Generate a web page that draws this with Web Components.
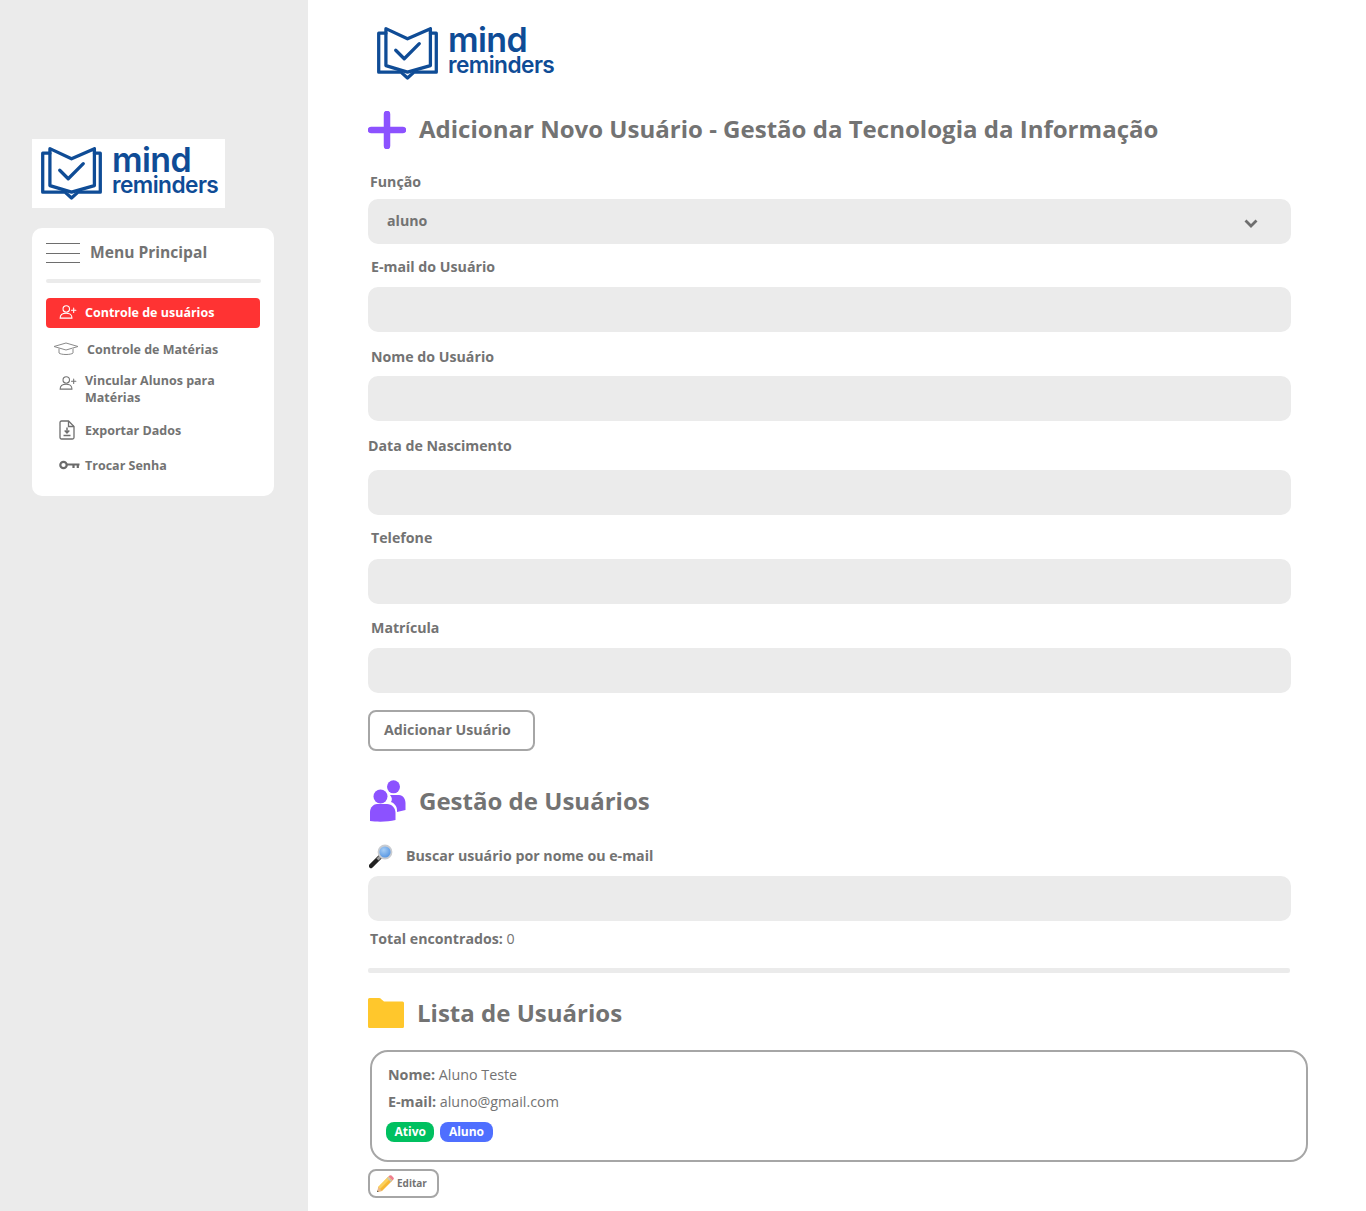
<!DOCTYPE html>
<html lang="pt-BR"><head><meta charset="utf-8"><title>Mind Reminders</title>
<style>
html,body{margin:0;padding:0;background:#fff}
body{font-family:"Open Sans","Noto Sans",sans-serif;color:#737373}
</style></head><body>
<mr-app>
  <mr-sidebar slot="side">
    <mr-logo boxed></mr-logo>
    <mr-menu>
      <mr-item active icon="user">Controle de usuários</mr-item>
      <mr-item icon="hat" style="--top:12px">Controle de Matérias</mr-item>
      <mr-item icon="user" style="--top:12px">Vincular Alunos para Matérias</mr-item>
      <mr-item icon="file" style="--top:12px">Exportar Dados</mr-item>
      <mr-item icon="key" style="--top:14px">Trocar Senha</mr-item>
    </mr-menu>
  </mr-sidebar>
  <mr-logo style="margin:25px 0 0 9px"></mr-logo>
  <mr-title icon="plus" style="margin-top:31px;--up:4px">Adicionar Novo Usuário - Gestão da Tecnologia da Informação</mr-title>
  <mr-field select value="aluno" style="--mt:23px;--gap:7px;--ml:2px">Função</mr-field>
  <mr-field style="--mt:13px;--gap:10px;--ml:3px">E-mail do Usuário</mr-field>
  <mr-field style="--mt:15px;--gap:9px;--ml:3px">Nome do Usuário</mr-field>
  <mr-field style="--mt:15px;--gap:14px;--ml:0px">Data de Nascimento</mr-field>
  <mr-field style="--mt:13px;--gap:11px;--ml:3px">Telefone</mr-field>
  <mr-field style="--mt:14px;--gap:10px;--ml:3px">Matrícula</mr-field>
  <mr-button style="margin-top:17px">Adicionar Usuário</mr-button>
  <mr-title icon="users" style="margin-top:29px;--up:2px">Gestão de Usuários</mr-title>
  <mr-field search style="--mt:24px;--gap:10px;--ml:38px">Buscar usuário por nome ou e-mail</mr-field>
  <mr-total count="0"></mr-total>
  <mr-rule></mr-rule>
  <mr-title icon="folder" style="margin-top:25px;--up:2px">Lista de Usuários</mr-title>
  <mr-card name="Aluno Teste" email="aluno@gmail.com"></mr-card>
  <mr-edit>Editar</mr-edit>
</mr-app>
<script>
const T=(h)=>{const t=document.createElement('template');t.innerHTML=h;return t};
const def=(n,h,init)=>{customElements.define(n,class extends HTMLElement{
  constructor(){super();this.attachShadow({mode:'open'}).appendChild(T(h).content.cloneNode(true));}
  connectedCallback(){init&&init(this,this.shadowRoot)}
})};
const ICONS={
 user:'<svg width="18" height="14" viewBox="0 0 20 16" fill="none" stroke="currentColor" stroke-width="1.2" stroke-linecap="round"><circle cx="8" cy="4.500" r="3.700"/><path d="M1 15c0-3.600 2.800-5.600 7-5.600 3 0 5.200 1 6 3 .4.900.5 1.600.5 2.600z"/><path d="M14 6h5M16.500 3.500v5"/></svg>',
 hat:'<svg width="26" height="14" viewBox="0 0 26 14" fill="none" stroke="#8a8a8a" stroke-width="1"><path d="M1 4.500 13 1l12 3.500L13 8z"/><path d="M6 6.500V11c2 2 12 2 14 0V6.500"/><path d="M20 6v5" stroke="#c4c4c4" stroke-width="2"/></svg>',
 file:'<svg width="16" height="20" viewBox="0 0 16 20" fill="none" stroke="#6f6f6f" stroke-width="1.300"><path d="M2.500 1h7L15 6.500V17.500a1.500 1.500 0 0 1-1.500 1.500h-11A1.500 1.500 0 0 1 1 17.500v-15A1.500 1.500 0 0 1 2.500 1z"/><path d="M9.500 1v5.500H15"/><path d="M8 7.500v5M5.700 10.500 8 13l2.300-2.500" stroke-width="1.500"/><path d="M4.500 15.500h7" stroke-width="1.500"/></svg>',
 key:'<svg width="21" height="10" viewBox="0 0 21 10" fill="none" stroke="#6a6a6a"><circle cx="4.500" cy="5" r="3.200" stroke-width="2.200"/><path d="M7.500 4.500H20.500M14.500 4.500v3.500M18.800 4.500v3.500" stroke-width="2.200"/></svg>',
 plus:'<svg width="38" height="38" viewBox="0 0 38 38"><path d="M19 3v32M3 19h32" stroke="#8c52ff" stroke-width="6.500" stroke-linecap="round"/></svg>',
 users:'<svg width="38" height="42" viewBox="0 0 38 42" fill="#8c52ff"><circle cx="25.500" cy="6.800" r="6.500"/><path d="M24 15H31C35 15 37.500 19 37.500 23V30L29 32V30C29 26 26 23 23 22C24.500 20 24 17 22 15z"/><circle cx="12.500" cy="16.500" r="7"/><path d="M2 41V32C2 27 6 24 9 24H19C24 24 27.500 28 27.500 33V40C20 42 9 42 2 41z"/></svg>',
 folder:'<svg width="36" height="30" viewBox="0 0 36 30" fill="#ffc72c"><path d="M1.500 0h9.500c1 0 1.700.4 2.300 1.200L16 3.500h18.500A1.500 1.500 0 0 1 36 5v23.500A1.500 1.500 0 0 1 34.500 30h-33A1.500 1.500 0 0 1 0 28.500v-27A1.500 1.500 0 0 1 1.500 0z"/></svg>'
};
def('mr-app',`<style>
:host{display:grid;grid-template-columns:308px 1fr;min-height:1211px;width:1366px;overflow:hidden}
.side{background:#ebebeb;min-height:1211px}
.main{display:flex;flex-direction:column;align-items:flex-start;padding-left:60px;padding-right:59px;min-width:0}
</style><div class="side"><slot name="side"></slot></div><div class="main"><slot></slot></div>`);
def('mr-sidebar',`<style>:host{display:flex;flex-direction:column;align-items:flex-start;padding:139px 34px 0 32px}</style><slot></slot>`);
def('mr-logo',`<style>
:host{display:flex;align-items:flex-start;gap:10px;color:#0f4c96;font-family:Inter,Roboto,sans-serif}
:host([boxed]){background:#fff;width:193px;height:69px;box-sizing:border-box;padding:6px 0 0 9px}
svg{display:block;flex:none;margin-top:2px}
.t{display:flex;flex-direction:column;font-weight:600}
.a{font-size:34px;line-height:30px;letter-spacing:-.6px;height:30px}
.b{font-size:22.700px;line-height:22px;letter-spacing:-.55px;margin-top:-1px}
</style><svg width="61" height="53" viewBox="52 48 186 162" fill="none" stroke="#0f4c96" stroke-width="10" stroke-linejoin="round" stroke-linecap="round"><path d="M79 53 145 84 215 53V166L145 186 79 166Z"/><path d="M79 67H57V186H125L145 204 165 186H233V67H215"/><path d="M109 119 135 145 181 99" stroke-width="10"/></svg><div class="t"><span class="a">mind</span><span class="b">reminders</span></div>`);
def('mr-menu',`<style>
:host{display:block;width:242px;height:268px;box-sizing:border-box;margin-top:20px;background:#fff;border-radius:10px;padding:15px 14px 0}
.h{display:flex;align-items:center;gap:10px;height:20px;font-size:15.600px;font-weight:700;color:#737373}
.h span{padding-bottom:3px}
.b{width:34px;height:20px;display:flex;flex-direction:column;justify-content:space-between}
.b i{display:block;height:1px;background:#6e6e6e}
hr{border:0;height:4px;background:#ebebeb;margin:16px 0 15px;width:215px;border-radius:2px}
</style><div class="h"><div class="b"><i></i><i></i><i></i></div><span>Menu Principal</span></div><hr><slot></slot>`);
def('mr-item',`<style>
:host{display:flex;align-items:center;width:214px;min-height:30px;box-sizing:border-box;margin-top:var(--top,0);padding:0 20px 2px 12px;border-radius:4px;font-size:12.500px;font-weight:700;line-height:17px;color:#737373}
:host([active]){background:#ff3333;color:#fff}
.i{flex:none;display:flex;justify-content:flex-start}
:host([icon=user]) .i{padding-left:1px;width:26px}
:host([icon=hat]) .i{margin-left:-5px;width:34px}
:host([icon=file]) .i{padding-left:1px;width:26px}
:host([icon=key]) .i{padding-left:1px;width:26px}
:host([icon=hat]),:host([icon=file]),:host([icon=key]){min-height:20px}
:host([icon=user]:not([active])){padding-right:30px;min-height:34px}
:host([icon=user]:not([active])) .i{margin-top:-12px}
</style><span class="i"></span><span><slot></slot></span>`,(el,s)=>{s.querySelector('.i').innerHTML=ICONS[el.getAttribute('icon')]});
def('mr-title',`<style>
:host{display:flex;align-items:center;gap:13px;height:38px;font-size:24.040px;font-weight:700;color:#737373;white-space:nowrap}
:host([icon=users]){height:42px}
:host([icon=folder]){height:30px}
.i{display:flex;flex:none}
.x{padding-bottom:var(--up,0)}
</style><span class="i"></span><span class="x"><slot></slot></span>`,(el,s)=>{s.querySelector('.i').innerHTML=ICONS[el.getAttribute('icon')]});
def('mr-field',`<style>
:host{display:block;width:923px;margin-top:var(--mt,0);font-size:14.200px;font-weight:700;color:#737373}
.l{display:flex;align-items:center;height:20px;box-sizing:border-box;padding:0 0 2px var(--ml,0);position:relative}
.m{position:absolute;left:1px;top:-2px;display:none}
:host([search]) .m{display:block}
.c{height:45px;margin-top:var(--gap,10px);background:#ebebeb;border-radius:10px;display:flex;align-items:center;justify-content:space-between;box-sizing:border-box;padding:0 33px 0 19px}
.v{padding-bottom:2px}
svg.a{display:none;margin-top:4px}
:host([select]) svg.a{display:block}
</style><div class="l"><svg class="m" width="25" height="25" viewBox="0 0 25 25"><defs><radialGradient id="g" cx=".4" cy=".35" r=".7"><stop offset="0" stop-color="#a6cdf5"/><stop offset="1" stop-color="#4a8ee0"/></radialGradient></defs><path d="M11 13 2 22" stroke="#222" stroke-width="4.500" stroke-linecap="round"/><path d="M8.500 15.500 11 13" stroke="#9a9a9a" stroke-width="3"/><circle cx="16" cy="8" r="6.500" fill="url(#g)" stroke="#c9ccd1" stroke-width="1.800"/></svg><slot></slot></div><div class="c"><span class="v"></span><svg class="a" width="14" height="9" viewBox="0 0 14 9" fill="none" stroke="#6e6e6e" stroke-width="2.800"><path d="M1.500 1.500 7 7l5.500-5.500"/></svg></div>`,(el,s)=>{s.querySelector('.v').textContent=el.getAttribute('value')||''});
def('mr-button',`<style>
:host{display:flex;align-items:center;width:167px;height:41px;box-sizing:border-box;padding:0 0 2px 14px;border:2px solid #a6a6a6;border-radius:8px;font-size:14.200px;font-weight:700;color:#737373}
</style><slot></slot>`);
def('mr-total',`<style>:host{display:block;margin:8px 0 0 2px;height:20px;line-height:20px;font-size:14.200px;color:#737373}b{font-weight:700}</style><b>Total encontrados:</b> <span></span>`,(el,s)=>{s.querySelector('span').textContent=el.getAttribute('count')});
def('mr-rule',`<style>:host{display:block;width:922px;height:5px;margin-top:19px;background:#ebebeb;border-radius:2px}</style>`);
def('mr-card',`<style>
:host{display:block;box-sizing:border-box;width:938px;height:112px;margin:22px 0 0 2px;border:2px solid #a6a6a6;border-radius:18px;padding:13px 16px 0;font-size:14.300px;color:#737373;line-height:20px}
b{font-weight:700}
.r2{margin-top:7px}
.tags{display:flex;gap:6px;margin:10px 0 0 -2px}
</style><div><b>Nome:</b> <span class="n"></span></div><div class="r2"><b>E-mail:</b> <span class="e"></span></div><div class="tags"><mr-badge color="#00c060">Ativo</mr-badge><mr-badge color="#4f6fff">Aluno</mr-badge></div>`,(el,s)=>{s.querySelector('.n').textContent=el.getAttribute('name');s.querySelector('.e').textContent=el.getAttribute('email')});
def('mr-badge',`<style>
:host{display:inline-flex;align-items:center;height:20px;padding:0 8.500px;border-radius:8px;font-size:12px;font-weight:700;color:#fff;background:var(--c)}
</style><slot></slot>`,(el)=>{el.style.setProperty('--c',el.getAttribute('color'))});
def('mr-edit',`<style>
:host{display:flex;align-items:center;gap:3px;width:71px;height:29px;box-sizing:border-box;margin-top:7px;padding:0 0 0 6px;border:2px solid #a6a6a6;border-radius:8px;font-size:10px;font-weight:700;color:#737373}
svg{flex:none}
span{padding-bottom:2px}
</style><svg width="18" height="18" viewBox="0 0 18 18"><path d="M12.500 1.500 16.500 5.500 6 16 1.500 16.800 2.200 12z" fill="#f7b733"/><path d="M12.500 1.500 14.500 3.500 4 14 2.200 12z" fill="#fbd15b"/><path d="M13.500.6a1.500 1.500 0 0 1 2 0l1.900 1.900a1.500 1.500 0 0 1 0 2L16.500 5.500 12.500 1.500z" fill="#ee7f8d"/><path d="M12 2 16 6l-1 1-4-4z" fill="#bfc5cc"/><path d="M2.200 12 6 16 1.500 16.800z" fill="#e9b98f"/><path d="M1.200 15.500 2.800 16.400 1 17z" fill="#444"/></svg><span><slot></slot></span>`);
</script>
</body></html>
